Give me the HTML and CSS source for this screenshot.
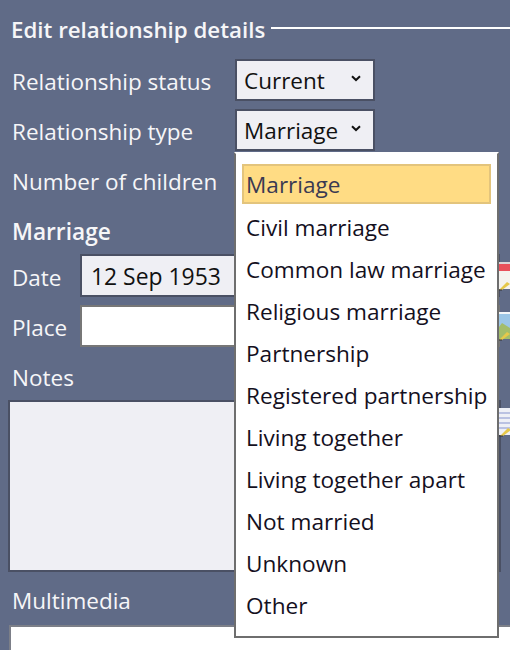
FILE: index.html
```
<!DOCTYPE html>
<html>

<head>
    <link rel="stylesheet" href="styles.css">
</head>

<body>
    <div class="panel">
        <div class="group-title">
            <span>Edit relationship details</span>
            <div class="title-line"></div>
        </div>

        <div class="row row-status">
            <label class="row-label">Relationship status</label>
            <div class="combo"><span>Current</span>
                <svg class="chevron" width="10" height="7" viewBox="0 0 10 7"><path d="M1 1.2 L5 5 L9 1.2" fill="none" stroke="#111" stroke-width="2"/></svg>
            </div>
        </div>
        <div class="row row-type">
            <label class="row-label">Relationship type</label>
            <div class="combo"><span>Marriage</span>
                <svg class="chevron" width="10" height="7" viewBox="0 0 10 7"><path d="M1 1.2 L5 5 L9 1.2" fill="none" stroke="#111" stroke-width="2"/></svg>
            </div>
        </div>
        <div class="row row-children">
            <label class="row-label">Number of children</label>
        </div>

        <div class="section-label">Marriage</div>
        <div class="row row-date">
            <label class="short-label">Date</label>
            <div class="field">12 Sep 1953</div>
            <svg class="side-icon" width="14" height="30" viewBox="0 0 14 30">
                <rect x="0" y="1" width="14" height="27" fill="#f4f2ee"/>
                <rect x="0" y="1" width="14" height="2" fill="#d9d5d8"/>
                <rect x="0" y="3" width="14" height="7" fill="#e8505b"/>
                <path d="M3 29 L11 21 L14 23 L6 29 Z" fill="#e6c84a"/>
                <path d="M0 29 L6 29" stroke="#333" stroke-width="1"/>
            </svg>
        </div>
        <div class="row row-place">
            <label class="short-label">Place</label>
            <div class="field field-white"></div>
            <svg class="side-icon" width="14" height="30" viewBox="0 0 14 30">
                <rect x="0" y="1" width="14" height="27" fill="#9cc6e6"/>
                <rect x="0" y="1" width="14" height="2" fill="#f4f6f8"/>
                <path d="M0 20 L6 12 L14 17 L14 28 L0 28 Z" fill="#a3bd6a"/>
                <path d="M3 29 L11 21 L14 23 L6 29 Z" fill="#e6c84a"/>
                <path d="M0 29 L6 29" stroke="#333" stroke-width="1"/>
            </svg>
        </div>

        <div class="notes-label">Notes</div>
        <div class="notes-row">
            <div class="notes-box"></div>
            <svg class="side-icon" width="14" height="30" viewBox="0 0 14 30">
                <rect x="0" y="1" width="14" height="27" fill="#eef0f6"/>
                <path d="M1 6 H14 M1 11 H14 M1 16 H14 M1 21 H14" stroke="#a9b2dc" stroke-width="1.5"/>
                <path d="M3 29 L11 21 L14 23 L6 29 Z" fill="#e6c84a"/>
                <path d="M0 29 L6 29" stroke="#333" stroke-width="1"/>
            </svg>
        </div>

        <div class="media-label">Multimedia</div>
        <div class="media-box"></div>

        <ul class="dropdown">
            <li class="selected">Marriage</li>
            <li>Civil marriage</li>
            <li>Common law marriage</li>
            <li>Religious marriage</li>
            <li>Partnership</li>
            <li>Registered partnership</li>
            <li>Living together</li>
            <li>Living together apart</li>
            <li>Not married</li>
            <li>Unknown</li>
            <li>Other</li>
        </ul>
    </div>
</body>

</html>
```

FILE: styles.css
```
html, body {
    margin: 0;
    padding: 0;
}

body {
    width: 510px;
    height: 650px;
    overflow: hidden;
    background-color: #606b87;
    font-family: "Open Sans", "Noto Sans", sans-serif;
    font-size: 22.5px;
    color: #f6f6f8;
}

.panel {
    position: relative;
    height: 650px;
    overflow: hidden;
    padding: 14px 0 0 12px;
    box-sizing: border-box;
}

.group-title {
    display: flex;
    align-items: center;
    margin-left: -1px;
    height: 30px;
    font-size: 22.3px;
    font-weight: 600;
}

.title-line {
    flex: 1;
    height: 2px;
    margin-left: 6px;
    background-color: #fff;
    margin-top: -2px;
}

.row {
    display: flex;
    align-items: center;
}

.row-status {
    margin-top: 14px;
    height: 44px;
}

.row-type {
    margin-top: 6px;
    height: 44px;
}

.row-children {
    margin-top: 6px;
    height: 44px;
}

.row-label {
    width: 223px;
    padding-top: 2px;
}

.combo {
    display: flex;
    align-items: center;
    justify-content: space-between;
    width: 140px;
    height: 42px;
    box-sizing: border-box;
    padding: 1px 12px 0 7px;
    background-color: #efeff4;
    border: 2px solid #4a5064;
    color: #111;
}

.chevron {
    margin-top: -5px;
}

.section-label {
    margin-top: 14px;
    height: 38px;
    font-size: 22.7px;
    font-weight: 600;
}

.row-date {
    margin-top: 0;
}

.row-place {
    margin-top: 8px;
}

.short-label {
    width: 69px;
    padding-top: 3px;
}

.field {
    width: 420px;
    height: 43px;
    box-sizing: border-box;
    padding-left: 9px;
    line-height: 42px;
    font-size: 22.9px;
    background-color: #efeff4;
    border: 2px solid #4a5064;
    color: #111;
    flex-shrink: 0;
}

.field-white {
    height: 42px;
    background-color: #fff;
    border-color: #777;
}

.side-icon {
    flex-shrink: 0;
    margin-left: -4px;
}

.notes-label {
    margin-top: 15px;
    height: 30px;
}

.notes-row {
    display: flex;
    margin-left: -4px;
    margin-top: 8px;
}

.notes-box {
    width: 493px;
    height: 172px;
    flex-shrink: 0;
    box-sizing: border-box;
    background-color: #efeff4;
    border: 2px solid #4a5064;
}

.notes-row .side-icon {
    margin-left: -4px;
    margin-top: 7px;
}

.media-label {
    margin-top: 13px;
    height: 30px;
}

.media-box {
    margin: 10px 0 0 -3px;
    height: 60px;
    background-color: #fff;
    border-top: 2px solid #7c7f88;
    border-left: 2px solid #7c7f88;
}

/* open list of the relationship type combo, lies over the form */
.dropdown {
    position: absolute;
    left: 234px;
    top: 152px;
    width: 265px;
    height: 486px;
    box-sizing: border-box;
    margin: 0;
    padding: 10px 6px 0 6px;
    list-style: none;
    background-color: #fff;
    border: 2px solid #6e6e6e;
    border-top-color: #fff;
    color: #14101e;
    font-size: 22.6px;
}

.dropdown li {
    height: 42px;
    box-sizing: border-box;
    padding-left: 4px;
    line-height: 42px;
    white-space: nowrap;
}

.dropdown li.selected {
    height: 40px;
    line-height: 38px;
    margin-bottom: 3px;
    padding-left: 2px;
    background-color: #ffdc84;
    border: 2px solid #e3c47c;
    color: #3a3a52;
}
```
